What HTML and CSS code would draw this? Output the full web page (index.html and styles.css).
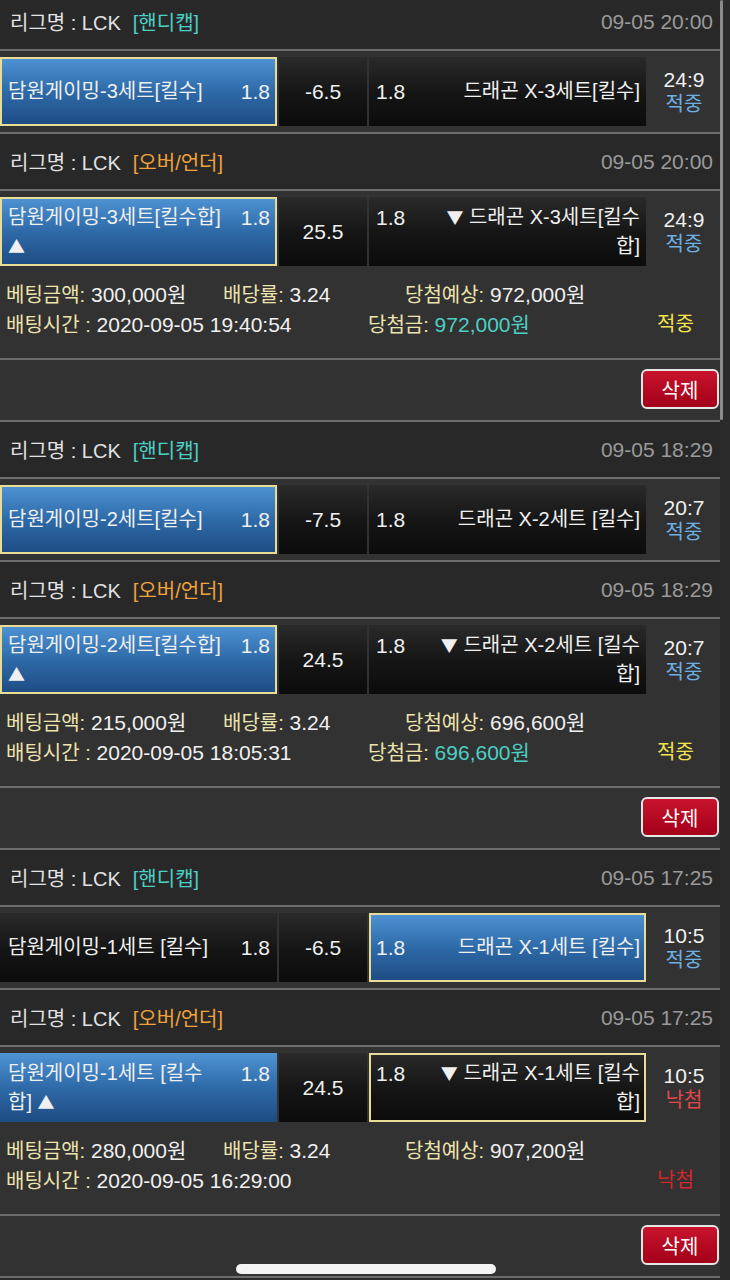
FILE: index.html
```html
<!DOCTYPE html>
<html lang="ko">
<head>
    <meta charset="UTF-8">
    <meta name="viewport" content="width=device-width, initial-scale=1.0">
    <title>배팅내역</title>
    <link rel="stylesheet" href="styles.css">
</head>
<body>
    <div class="screen">
        <div class="list">

            <!-- 1 -->
            <div class="ticket">
                <div class="game-head">
                    <span class="league">리그명 : LCK</span>
                    <span class="type type-handi">[핸디캡]</span>
                    <span class="game-time">09-05 20:00</span>
                </div>
                <div class="game-odds">
                    <div class="pick-box home is-picked is-win">
                        <div class="pick-inner"><span class="team">담원게이밍-3세트[킬수]</span><span class="rate">1.8</span></div>
                    </div>
                    <div class="line-box">-6.5</div>
                    <div class="pick-box away">
                        <div class="pick-inner"><span class="rate">1.8</span><span class="team">드래곤 X-3세트[킬수]</span></div>
                    </div>
                    <div class="score"><span class="score-num">24:9</span><span class="score-res hit">적중</span></div>
                </div>
                <div class="game-head">
                    <span class="league">리그명 : LCK</span>
                    <span class="type type-ou">[오버/언더]</span>
                    <span class="game-time">09-05 20:00</span>
                </div>
                <div class="game-odds last">
                    <div class="pick-box home is-picked is-win">
                        <div class="pick-inner"><span class="team">담원게이밍-3세트[킬수합] <span class="arrow">▲</span></span><span class="rate">1.8</span></div>
                    </div>
                    <div class="line-box">25.5</div>
                    <div class="pick-box away">
                        <div class="pick-inner"><span class="rate">1.8</span><span class="team"><span class="arrow">▼</span> 드래곤 X-3세트[킬수합]</span></div>
                    </div>
                    <div class="score"><span class="score-num">24:9</span><span class="score-res hit">적중</span></div>
                </div>
                <div class="ticket-info">
                    <div class="info-row row-a">
                        <span><em>베팅금액:</em> 300,000원</span>
                        <span><em>배당률:</em> 3.24</span>
                        <span><em>당첨예상:</em> 972,000원</span>
                    </div>
                    <div class="info-row row-b">
                        <span><em>배팅시간 :</em> 2020-09-05 19:40:54</span>
                        <span><em>당첨금:</em> <b class="won">972,000원</b></span>
                        <span class="result result-win">적중</span>
                    </div>
                </div>
                <div class="ticket-actions">
                    <button class="btn-delete">삭제</button>
                </div>
            </div>

            <!-- 2 -->
            <div class="ticket">
                <div class="game-head">
                    <span class="league">리그명 : LCK</span>
                    <span class="type type-handi">[핸디캡]</span>
                    <span class="game-time">09-05 18:29</span>
                </div>
                <div class="game-odds">
                    <div class="pick-box home is-picked is-win">
                        <div class="pick-inner"><span class="team">담원게이밍-2세트[킬수]</span><span class="rate">1.8</span></div>
                    </div>
                    <div class="line-box">-7.5</div>
                    <div class="pick-box away">
                        <div class="pick-inner"><span class="rate">1.8</span><span class="team">드래곤 X-2세트 [킬수]</span></div>
                    </div>
                    <div class="score"><span class="score-num">20:7</span><span class="score-res hit">적중</span></div>
                </div>
                <div class="game-head">
                    <span class="league">리그명 : LCK</span>
                    <span class="type type-ou">[오버/언더]</span>
                    <span class="game-time">09-05 18:29</span>
                </div>
                <div class="game-odds last">
                    <div class="pick-box home is-picked is-win">
                        <div class="pick-inner"><span class="team">담원게이밍-2세트[킬수합] <span class="arrow">▲</span></span><span class="rate">1.8</span></div>
                    </div>
                    <div class="line-box">24.5</div>
                    <div class="pick-box away">
                        <div class="pick-inner"><span class="rate">1.8</span><span class="team"><span class="arrow">▼</span> 드래곤 X-2세트 [킬수합]</span></div>
                    </div>
                    <div class="score"><span class="score-num">20:7</span><span class="score-res hit">적중</span></div>
                </div>
                <div class="ticket-info">
                    <div class="info-row row-a">
                        <span><em>베팅금액:</em> 215,000원</span>
                        <span><em>배당률:</em> 3.24</span>
                        <span><em>당첨예상:</em> 696,600원</span>
                    </div>
                    <div class="info-row row-b">
                        <span><em>배팅시간 :</em> 2020-09-05 18:05:31</span>
                        <span><em>당첨금:</em> <b class="won">696,600원</b></span>
                        <span class="result result-win">적중</span>
                    </div>
                </div>
                <div class="ticket-actions">
                    <button class="btn-delete">삭제</button>
                </div>
            </div>

            <!-- 3 -->
            <div class="ticket">
                <div class="game-head">
                    <span class="league">리그명 : LCK</span>
                    <span class="type type-handi">[핸디캡]</span>
                    <span class="game-time">09-05 17:25</span>
                </div>
                <div class="game-odds">
                    <div class="pick-box home">
                        <div class="pick-inner"><span class="team">담원게이밍-1세트 [킬수]</span><span class="rate">1.8</span></div>
                    </div>
                    <div class="line-box">-6.5</div>
                    <div class="pick-box away is-picked is-win">
                        <div class="pick-inner"><span class="rate">1.8</span><span class="team">드래곤 X-1세트 [킬수]</span></div>
                    </div>
                    <div class="score"><span class="score-num">10:5</span><span class="score-res hit">적중</span></div>
                </div>
                <div class="game-head">
                    <span class="league">리그명 : LCK</span>
                    <span class="type type-ou">[오버/언더]</span>
                    <span class="game-time">09-05 17:25</span>
                </div>
                <div class="game-odds last">
                    <div class="pick-box home is-picked">
                        <div class="pick-inner"><span class="team">담원게이밍-1세트 [킬수합] <span class="arrow">▲</span></span><span class="rate">1.8</span></div>
                    </div>
                    <div class="line-box">24.5</div>
                    <div class="pick-box away is-win">
                        <div class="pick-inner"><span class="rate">1.8</span><span class="team"><span class="arrow">▼</span> 드래곤 X-1세트 [킬수합]</span></div>
                    </div>
                    <div class="score"><span class="score-num">10:5</span><span class="score-res miss">낙첨</span></div>
                </div>
                <div class="ticket-info">
                    <div class="info-row row-a">
                        <span><em>베팅금액:</em> 280,000원</span>
                        <span><em>배당률:</em> 3.24</span>
                        <span><em>당첨예상:</em> 907,200원</span>
                    </div>
                    <div class="info-row row-b">
                        <span><em>배팅시간 :</em> 2020-09-05 16:29:00</span>
                        <span></span>
                        <span class="result result-lose">낙첨</span>
                    </div>
                </div>
                <div class="ticket-actions">
                    <button class="btn-delete">삭제</button>
                </div>
            </div>

        </div>

        <div class="scroll-bar"></div>
        <div class="home-bar"></div>
    </div>
</body>
</html>
```

FILE: styles.css
```css
:root {
    --color-bg: #2b2b2b;
    --color-row: #323232;
    --color-head: #282828;
    --color-line: #6c6c6c;
    --color-text: #f0f0f0;
    --color-gray: #9a9a9a;
    --color-label: #ece3ad;
    --color-teal: #4ccfc4;
    --color-orange: #f0a23c;
    --color-blue-text: #6eb0e4;
    --color-yellow: #f2e24e;
    --color-border-win: #e9dc96;
}

body {
    margin: 0;
    padding: 0;
    background-color: var(--color-bg);
    color: var(--color-text);
    font-family: "Liberation Sans", "Noto Sans CJK KR", sans-serif;
    font-size: 20px;
    overflow: hidden;
}

.screen {
    position: relative;
    width: 730px;
    height: 1280px;
    overflow: hidden;
}

.list {
    width: 720px;
    margin-top: -6px;
}

/* 경기 헤더 */
.game-head {
    display: flex;
    align-items: center;
    height: 55px;
    padding: 0 7px 0 10px;
    background-color: var(--color-head);
    border-bottom: 2px solid var(--color-line);
    font-size: 20px;
}

.league {
    color: #e2e2e2;
}

.type {
    margin-left: 12px;
}

.type-handi {
    color: var(--color-teal);
}

.type-ou {
    color: var(--color-orange);
}

.game-time {
    margin-left: auto;
    font-size: 21px;
    color: var(--color-gray);
}

/* 배당 줄 */
.game-odds {
    display: flex;
    padding: 6px 0;
    background-color: var(--color-row);
    border-bottom: 2px solid var(--color-line);
}

.game-odds.last {
    border-bottom: none;
}

.pick-box,
.line-box {
    box-sizing: border-box;
    height: 69px;
    border: 2px solid transparent;
    background-origin: border-box;
    background-image: linear-gradient(#2a2a2a, #141414 55%, #0c0c0c);
}

.pick-box {
    display: flex;
    align-items: center;
    width: 277px;
}

.pick-box.is-picked {
    background-image: linear-gradient(#4f94d4, #2e6aa8 50%, #1e4b82);
}

.pick-box.is-win {
    border-color: var(--color-border-win);
}

.pick-inner {
    display: flex;
    align-items: flex-start;
    width: 100%;
    line-height: 29px;
}

.home .pick-inner {
    padding: 0 5px 0 6px;
}

.away .pick-inner {
    padding: 0 4px 0 5px;
}

.team {
    font-size: 20px;
}

.home .team {
    width: 216px;
}

.away .team {
    width: 206px;
    margin-left: auto;
    text-align: right;
}

.arrow {
    font-family: "Noto Sans CJK KR", sans-serif;
    font-size: 17px;
    line-height: 1;
}

.rate {
    font-size: 21px;
}

.home .rate {
    margin-left: auto;
}

.line-box {
    display: flex;
    align-items: center;
    justify-content: center;
    width: 88px;
    margin: 0 2px;
    font-size: 21px;
}

.score {
    flex: 1;
    display: flex;
    flex-direction: column;
    align-items: center;
    justify-content: center;
    line-height: 24px;
    padding-left: 2px;
}

.score-num {
    font-size: 21px;
}

.score-res {
    font-size: 20px;
}

.score-res.hit {
    color: var(--color-blue-text);
}

.score-res.miss {
    color: #e4474b;
}

/* 배팅 정보 */
.ticket-info {
    padding: 8px 0 18px 6px;
    background-color: var(--color-row);
    border-bottom: 2px solid var(--color-line);
    line-height: 29px;
}

.info-row {
    display: grid;
    white-space: nowrap;
    font-size: 21px;
}

.row-a {
    grid-template-columns: 217px 182px 1fr;
}

.row-b {
    grid-template-columns: 362px 289px 1fr;
}

.info-row em {
    font-style: normal;
    font-size: 20px;
    color: var(--color-label);
}

.won {
    font-weight: normal;
    color: var(--color-teal);
}

.result {
    font-size: 20px;
}

.result-win {
    color: var(--color-yellow);
}

.result-lose {
    color: #d8252b;
}

/* 삭제 */
.ticket-actions {
    display: flex;
    justify-content: flex-end;
    height: 51px;
    padding: 9px 1px 0 0;
    background-color: var(--color-row);
    border-bottom: 2px solid var(--color-line);
}

.btn-delete {
    width: 78px;
    height: 40px;
    padding: 0;
    border: 2px solid #e6e6e6;
    border-radius: 6px;
    background: linear-gradient(#c8142c, #a3001a);
    color: #ffffff;
    font-family: "Liberation Sans", "Noto Sans CJK KR", sans-serif;
    font-size: 20px;
}

/* 스크롤 / 홈 인디케이터 */
.scroll-bar {
    position: absolute;
    left: 720px;
    top: 0;
    width: 3px;
    height: 420px;
    border-radius: 2px;
    background-color: #8a8a8a;
}

.home-bar {
    position: absolute;
    left: 236px;
    top: 1264px;
    width: 260px;
    height: 10px;
    border-radius: 5px;
    background-color: #f4f4f4;
}
```
